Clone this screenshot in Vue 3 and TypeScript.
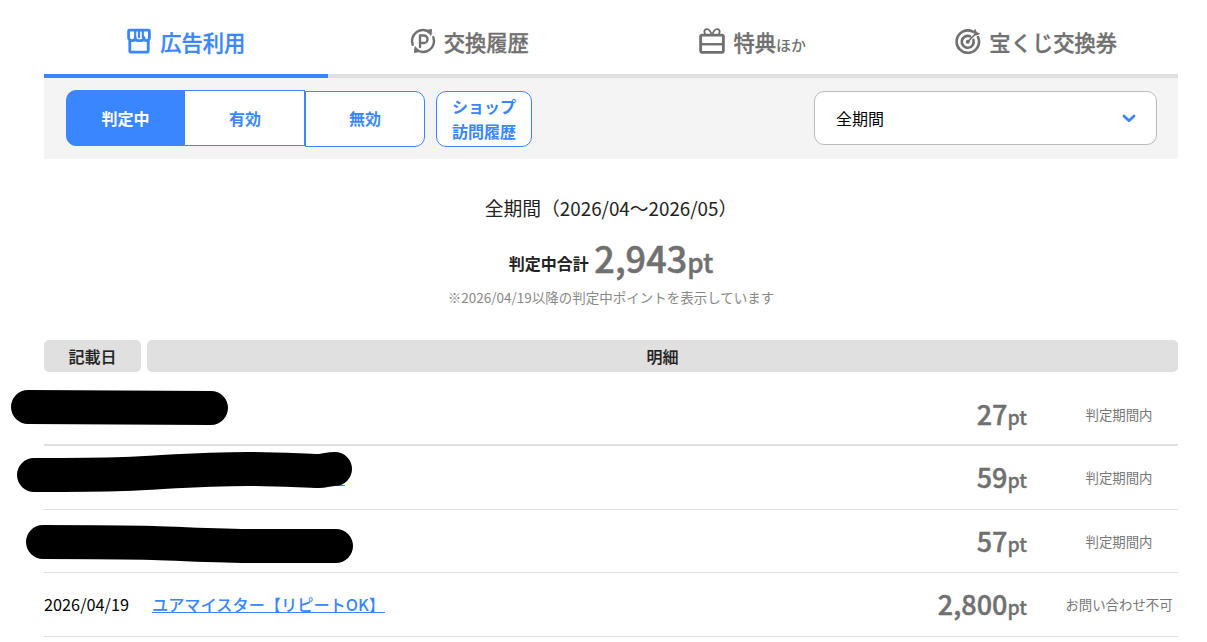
<script setup lang="ts">
interface Row {
  date: string
  title: string
  points: string
  status: string
  linkWidth: number
}

const rows: Row[] = [
  { date: '', title: '', points: '27', status: '判定期間内', linkWidth: 0 },
  { date: '', title: '', points: '59', status: '判定期間内', linkWidth: 193 },
  { date: '', title: '', points: '57', status: '判定期間内', linkWidth: 0 },
  { date: '2026/04/19', title: 'ユアマイスター【リピートOK】', points: '2,800', status: 'お問い合わせ不可', linkWidth: 0 },
]
</script>

<template>
  <main class="page">
    <nav class="tabs">
      <a class="tab tab--active">
        <svg class="tab-icon" viewBox="0 0 24 24" fill="none" stroke="currentColor" stroke-width="2.600" stroke-linejoin="round" stroke-linecap="round">
          <path d="M3.500 12v9c0 .8.500 1.300 1.300 1.300h14.400c.8 0 1.300-.5 1.300-1.300v-9" />
          <path d="M3.400 2h17.200c.6 0 1 .4 1 1v6c0 1.500-1.200 2.600-2.600 2.600-1.300 0-2.500-1-2.500-2.600 0 1.600-1.200 2.600-2.500 2.600H11c-1.300 0-2.500-1-2.500-2.600 0 1.600-1.200 2.600-2.500 2.600-1.700 0-3.600-1-3.600-2.600V3c0-.6.400-1 1-1z" />
          <path d="M8.500 2.500v6M12 2.500v6M15.500 2.500v6" stroke-width="2" />
        </svg>
        <span>広告利用</span>
      </a>
      <a class="tab">
        <svg class="tab-icon" viewBox="0 0 26 26" fill="none" stroke="currentColor" stroke-width="2.400" stroke-linecap="round" stroke-linejoin="round">
          <path d="M20.070 4.570A11 11 0 0 0 2.660 16.760" />
          <path d="M5.930 21.430A11 11 0 0 0 23.340 9.240" />
          <path d="M16.500 2.500l5-1-.5 5.500z" fill="currentColor" stroke-width="1" />
          <path d="M9.500 23.500l-5 1 .5-5.500z" fill="currentColor" stroke-width="1" />
          <path d="M10 19V7.500h3.800a3.700 3.700 0 0 1 0 7.500H10" />
        </svg>
        <span>交換履歴</span>
      </a>
      <a class="tab">
        <svg class="tab-icon" viewBox="0 0 24 24" fill="none" stroke="currentColor" stroke-width="2.600" stroke-linejoin="round">
          <rect x="1.500" y="6.500" width="21" height="16" rx="1.400" />
          <path d="M2 15h20" stroke-width="2.200" />
          <path d="M12 7C11 3.500 9 .8 7 1 4.500 1.200 4 5 7 7M12 7c1-3.500 3-6.200 5-6 2.500.2 3 4-0 6" stroke-width="1.700" />
        </svg>
        <span>特典<small>ほか</small></span>
      </a>
      <a class="tab">
        <svg class="tab-icon" viewBox="0 0 26 26" fill="none" stroke="currentColor" stroke-width="2.600" stroke-linecap="round">
          <path d="M17.800 3.600A11.200 11.200 0 1 0 23 9" />
          <path d="M15 8.300a6 6 0 1 0 3.400 3.600" />
          <circle cx="12.800" cy="13.700" r="2" fill="currentColor" stroke="none" />
          <path d="M12.800 13.700L21 5.500" stroke-width="1.700" />
          <path d="M19 5l1-3.500 1.500 3 3 1.200-3.300 1.200z" fill="currentColor" stroke-width="1" />
        </svg>
        <span>宝くじ交換券</span>
      </a>
    </nav>

    <section class="filters">
      <div class="segments">
        <button type="button" class="seg seg--on">判定中</button>
        <button type="button" class="seg seg--mid">有効</button>
        <button type="button" class="seg seg--end">無効</button>
      </div>
      <button type="button" class="shop">ショップ<br />訪問履歴</button>
      <div class="select">
        <span>全期間</span>
        <svg class="chevron" viewBox="0 0 12 8" fill="none" stroke="#3a86ff" stroke-width="2.400" stroke-linecap="round" stroke-linejoin="round">
          <path d="M1.500 1.700L6 6l4.500-4.300" />
        </svg>
      </div>
    </section>

    <section class="summary">
      <p class="period">全期間（2026/04～2026/05）</p>
      <p class="total"><span class="total-label">判定中合計</span> <b>2,943</b><em>pt</em></p>
      <p class="note">※2026/04/19以降の判定中ポイントを表示しています</p>
    </section>

    <div class="table-head">
      <div class="th th--date">記載日</div>
      <div class="th">明細</div>
    </div>

    <ul class="list">
      <li v-for="(row, i) in rows" :key="i" class="row" :class="{ 'row--first': i === 0 }">
        <span class="date">{{ row.date }}</span>
        <span class="title">
          <a v-if="row.title" class="link">{{ row.title }}</a>
          <a v-else-if="row.linkWidth" class="link link--blank" :style="{ width: row.linkWidth + 'px' }"></a>
        </span>
        <span class="points"><b>{{ row.points }}</b>pt</span>
        <span class="status">{{ row.status }}</span>
      </li>
    </ul>

    <svg class="redactions" viewBox="0 0 1207 642" fill="none" stroke="#000" stroke-width="34" stroke-linecap="round" stroke-linejoin="round">
      <path d="M28 407c60 0 120 1 183 1" />
      <path d="M34 475c30 0 60 0 90-1 45-2 75-5 125-5 35 0 55 2 70 2 5 0 10-2 16-2" />
      <path d="M43 542c35 0 75 0 110 1 35 1 70 3 110 3h73" />
    </svg>
  </main>
</template>

<style scoped>
.page {
  position: relative;
  width: 1134px;
  height: 642px;
  margin-left: 44px;
  overflow: visible;
  font-family: "Noto Sans CJK JP", "Noto Sans", sans-serif;
  color: #222;
}

.tabs {
  display: grid;
  grid-template-columns: repeat(4, 1fr);
  height: 78px;
  box-sizing: border-box;
  border-bottom: 4px solid #e0e0e0;
}

.tab {
  display: flex;
  align-items: center;
  justify-content: center;
  gap: 8px;
  height: 78px;
  box-sizing: border-box;
  padding-top: 8px;
  font-size: 21.300px;
  font-weight: 500;
  -webkit-text-stroke: 0.3px currentColor;
  color: #707070;
  border-bottom: 4px solid transparent;
}

.tab small {
  font-size: 15px;
  -webkit-text-stroke: 0;
}

.tab--active {
  color: #3a86ff;
  border-bottom-color: #3a86ff;
}

.tab-icon {
  width: 26px;
  height: 26px;
  flex: none;
}

.filters {
  display: flex;
  align-items: flex-start;
  height: 81px;
  box-sizing: border-box;
  padding: 12px 21px 0 22px;
  background: #f4f4f4;
}

.segments {
  display: flex;
  height: 56px;
}

.seg {
  width: 120px;
  height: 56px;
  padding: 0;
  border: 1px solid #3a86ff;
  background: #fff;
  color: #3a86ff;
  font-family: inherit;
  font-size: 16px;
  font-weight: 700;
}

.seg--on {
  width: 119px;
  border-radius: 10px 0 0 10px;
  background: #3a86ff;
  color: #fff;
}

.seg--mid {
  border-left: none;
  padding-left: 1px;
  height: 55.500px;
}

.seg--end {
  height: 55.500px;
  margin-top: 1px;
  padding-bottom: 2px;
  border-radius: 0 10px 10px 0;
}

.shop {
  width: 96px;
  height: 56px;
  margin-left: 11px;
  margin-top: 1px;
  padding: 0;
  border: 1px solid #3a86ff;
  border-radius: 10px;
  background: #fff;
  color: #3a86ff;
  font-family: inherit;
  font-size: 16px;
  font-weight: 700;
  line-height: 25px;
}

.select {
  display: flex;
  align-items: center;
  justify-content: space-between;
  box-sizing: border-box;
  width: 343px;
  height: 54px;
  margin-top: 1px;
  margin-left: auto;
  padding: 0 20px 0 21px;
  border: 1px solid #bbb;
  border-radius: 10px;
  background: #fff;
  color: #000;
  font-size: 16px;
}

.chevron {
  width: 14px;
  height: 9px;
}

.summary {
  display: flex;
  flex-direction: column;
  align-items: center;
  height: 181px;
  box-sizing: border-box;
  padding-top: 35px;
}

.summary p {
  margin: 0;
}

.period {
  font-size: 18.800px;
  line-height: 28px;
  color: #222;
}

.total {
  margin-top: 12px !important;
  height: 46px;
  line-height: 46px;
  color: #707070;
}

.total-label {
  vertical-align: 3px;
  font-size: 16px;
  font-weight: 700;
  color: #222;
}

.total b {
  margin-left: 2px;
  font-size: 36px;
  font-weight: 500;
  -webkit-text-stroke: 0.5px currentColor;
}

.total em {
  font-style: normal;
  font-size: 26px;
  font-weight: 500;
  -webkit-text-stroke: 0.4px currentColor;
}

.note {
  margin-top: 7px !important;
  font-size: 13.500px;
  line-height: 20px;
  color: #888;
}

.table-head {
  display: flex;
  gap: 6px;
}

.th {
  flex: 1;
  height: 32px;
  border-radius: 5px;
  background: #e0e0e0;
  font-size: 16px;
  font-weight: 500;
  -webkit-text-stroke: 0.2px currentColor;
  line-height: 32px;
  text-align: center;
}

.th--date {
  flex: 0 0 97px;
}

.list {
  margin: 0;
  padding: 12px 0 0;
  list-style: none;
}

.row {
  display: grid;
  grid-template-columns: 108px 1fr 121px 151px;
  align-items: center;
  box-sizing: border-box;
  height: 63.500px;
  border-bottom: 1px solid #e0e0e0;
}

.row--first {
  height: 62px;
  border-bottom-width: 2px;
}

.date {
  font-size: 16.300px;
  color: #000;
}

.link {
  color: #3a86ff;
  font-size: 16.200px;
  font-weight: 500;
  text-decoration: underline;
}

.link--blank {
  display: inline-block;
  height: 0;
  margin-top: 22px;
  border-bottom: 1px solid #3a86ff;
}

.points {
  text-align: right;
  padding-bottom: 1px;
  color: #707070;
  font-size: 19.500px;
  font-weight: 500;
  -webkit-text-stroke: 0.3px currentColor;
}

.points b {
  font-size: 27px;
  font-weight: 500;
  -webkit-text-stroke: 0.4px currentColor;
}

.status {
  text-align: center;
  padding-left: 33px;
  font-size: 13.400px;
  color: #777;
  white-space: nowrap;
}

.redactions {
  position: absolute;
  top: 0;
  left: -44px;
  width: 1207px;
  height: 642px;
  pointer-events: none;
}
</style>

<style>
html,
body {
  margin: 0;
  background: #fff;
}
</style>
